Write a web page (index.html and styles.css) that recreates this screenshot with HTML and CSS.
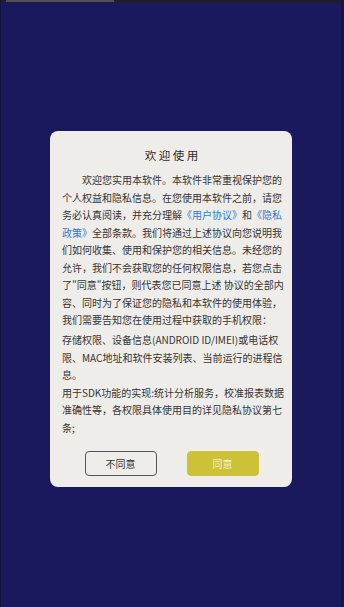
FILE: index.html
```html
<!DOCTYPE html>
<html lang="zh-CN">

<head>
    <meta charset="UTF-8">
    <title>欢迎使用</title>
    <meta name="viewport" content="width=device-width, initial-scale=1">
    <link rel="stylesheet" href="styles.css">
</head>

<body>
    <div class="status-strip">
        <div class="status-bar"></div>
    </div>

    <div class="screen">
        <div class="dialog">
            <h1 class="dialog-title">欢迎使用</h1>

            <p class="dialog-text first">
                欢迎您实用本软件。本软件非常重视保护您的<br>
                个人权益和隐私信息。在您使用本软件之前，请您<br>
                务必认真阅读，并充分理解<a href="#">《用户协议》</a>和<a href="#">《隐私<br>
                政策》</a>全部条款。我们将通过上述协议向您说明我<br>
                们如何收集、使用和保护您的相关信息。未经您的<br>
                允许，我们不会获取您的任何权限信息，若您点击<br>
                了"同意"按钮，则代表您已同意上述 协议的全部内<br>
                容、同时为了保证您的隐私和本软件的使用体验，<br>
                我们需要告知您在使用过程中获取的手机权限：
            </p>

            <p class="dialog-text">
                存储权限、设备信息(ANDROID ID/IMEI)或电话权<br>
                限、MAC地址和软件安装列表、当前运行的进程信<br>
                息。<br>
                用于SDK功能的实现:统计分析服务，校准报表数据<br>
                准确性等，各权限具体使用目的详见隐私协议第七<br>
                条;
            </p>

            <div class="dialog-buttons">
                <button class="btn btn-cancel">不同意</button>
                <button class="btn btn-ok">同意</button>
            </div>
        </div>
    </div>
</body>

</html>
```

FILE: styles.css
```css
html,
body {
    margin: 0;
    height: 100%;
}

body {
    font-family: "Noto Sans CJK SC", "Noto Sans", sans-serif;
    background-color: #1a195e;
    border-left: 1px solid #14143a;
    border-right: 3px solid #15154a;
    box-sizing: border-box;
}

.status-strip {
    height: 3px;
    background-color: #1d1d2e;
    padding-left: 5px;
}

.status-bar {
    width: 108px;
    height: 2px;
    background-color: #505060;
}

.screen {
    padding-top: 128px;
}

.dialog {
    width: 242px;
    margin: 0 auto;
    box-sizing: border-box;
    padding: 15px 11px 11px 12px;
    background-color: #eeede9;
    border-radius: 8px;
    color: #353535;
}

.dialog-title {
    margin: 0 0 7px;
    font-size: 11.5px;
    line-height: 18px;
    font-weight: normal;
    letter-spacing: 2.5px;
    text-indent: 2.5px;
    text-align: center;
    color: #2c2c2c;
}

.dialog-text {
    margin: 0;
    font-size: 10px;
    line-height: 17.5px;
    white-space: nowrap;
}

.dialog-text.first {
    text-indent: 2em;
    margin-bottom: 2.5px;
}

.dialog-text a {
    color: #2f7ccf;
    text-decoration: none;
}

.dialog-buttons {
    display: flex;
    justify-content: center;
    gap: 30px;
    margin-top: 15px;
}

.btn {
    width: 72px;
    height: 25px;
    font-family: inherit;
    font-size: 10px;
    border-radius: 4px;
    padding: 0;
}

.btn-cancel {
    background-color: transparent;
    border: 1px solid #555;
    color: #333;
}

.btn-ok {
    background-color: #cdc237;
    border: 1px solid #cdc237;
    color: #f3f1d6;
}
```
